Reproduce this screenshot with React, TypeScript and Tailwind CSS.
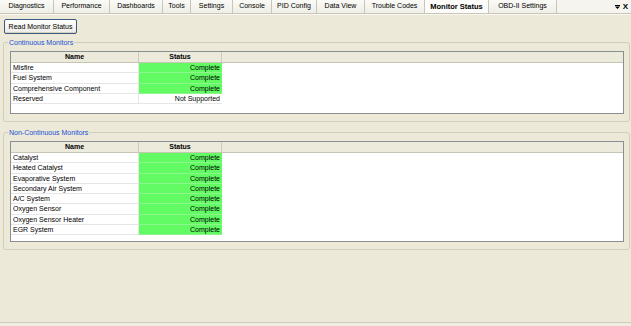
import React from "react";

const tabs: { label: string; w: number; active?: boolean }[] = [
  { label: "Diagnostics", w: 54 },
  { label: "Performance", w: 56 },
  { label: "Dashboards", w: 53 },
  { label: "Tools", w: 28 },
  { label: "Settings", w: 42 },
  { label: "Console", w: 39 },
  { label: "PID Config", w: 45 },
  { label: "Data View", w: 48 },
  { label: "Trouble Codes", w: 60 },
  { label: "Monitor Status", w: 64, active: true },
  { label: "OBD-II Settings", w: 68 },
];

type Row = { name: string; status: string };

const continuous: Row[] = [
  { name: "Misfire", status: "Complete" },
  { name: "Fuel System", status: "Complete" },
  { name: "Comprehensive Component", status: "Complete" },
  { name: "Reserved", status: "Not Supported" },
];

const nonContinuous: Row[] = [
  { name: "Catalyst", status: "Complete" },
  { name: "Heated Catalyst", status: "Complete" },
  { name: "Evaporative System", status: "Complete" },
  { name: "Secondary Air System", status: "Complete" },
  { name: "A/C System", status: "Complete" },
  { name: "Oxygen Sensor", status: "Complete" },
  { name: "Oxygen Sensor Heater", status: "Complete" },
  { name: "EGR System", status: "Complete" },
];

function Table({ rows, height }: { rows: Row[]; height: string }) {
  return (
    <div className={`${height} bg-white border border-[#8a8f96] flex flex-col overflow-hidden`}>
      <div className="flex h-[11px] shrink-0 bg-[#ebeadb] border-b border-[#c9c5b5] text-black font-bold leading-[10px]">
        <div className="w-[128px] text-center border-r border-[#cfcbbb]">Name</div>
        <div className="w-[83px] text-center border-r border-[#cfcbbb]">Status</div>
        <div className="flex-1" />
      </div>
      {rows.map((r) => {
        const ok = r.status === "Complete";
        return (
          <div key={r.name} className="flex h-[10.25px] shrink-0 leading-[9px]">
            <div className="w-[128px] pl-[2px] border-b border-r border-[#e6e6e6] whitespace-nowrap">
              {r.name}
            </div>
            <div
              className={`w-[83px] pr-[2px] text-right border-b whitespace-nowrap ${
                ok ? "bg-[#63fb63] border-[#8cf58c]" : "bg-white border-[#e6e6e6]"
              }`}
            >
              {r.status}
            </div>
          </div>
        );
      })}
    </div>
  );
}

function Group({
  title,
  rows,
  height,
  className,
}: {
  title: string;
  rows: Row[];
  height: string;
  className: string;
}) {
  return (
    <fieldset
      className={`border border-[#d0cdbc] rounded-[3px] ml-[3px] mr-[1px] pl-[6px] pr-[5px] pt-[4px] pb-[7px] ${className}`}
    >
      <legend className="ml-[-2px] px-[1px] text-[#1a4fd6] leading-[9px]">{title}</legend>
      <Table rows={rows} height={height} />
    </fieldset>
  );
}

export default function App() {
  return (
    <div
      className="w-[631px] h-[326px] bg-[#ece9d8] flex flex-col text-[7px] text-black overflow-hidden"
      style={{ fontFamily: '"Liberation Sans", Arial, sans-serif' }}
    >
      <div className="h-[14px] shrink-0 flex bg-[#f5f4ef] border-b border-[#c9c6b6]">
        {tabs.map((t) => (
          <div
            key={t.label}
            style={{ width: t.w }}
            className={`h-[13px] flex items-center justify-center border-r border-[#c8c6b8] whitespace-nowrap ${
              t.active ? "bg-[#fcfcfa] font-bold text-[7.5px]" : "bg-gradient-to-b from-[#fafaf7] to-[#efeee7]"
            }`}
          >
            {t.label}
          </div>
        ))}
        <div className="flex-1 flex items-center justify-end gap-[3px] pr-[3px]">
          <svg width="5" height="4" viewBox="0 0 5 4">
            <rect x="0" y="0" width="5" height="1" fill="#000" />
            <path d="M0 1.5 H5 L2.5 4 Z" fill="#000" />
          </svg>
          <span className="font-bold text-[8px] leading-[8px]">X</span>
        </div>
      </div>
      <div className="h-[1px] shrink-0 bg-[#f9f8f3]" />

      <div className="pl-[4px] pt-[4px] shrink-0">
        <button className="w-[73px] h-[15px] rounded-[2px] border border-[#3a5a80] bg-gradient-to-b from-[#ffffff] to-[#ecebe4] text-[7px] leading-[12px] text-black shadow-[inset_0_-1px_0_#d6d0c0]">
          Read Monitor Status
        </button>
      </div>

      <Group
        title="Continuous Monitors"
        rows={continuous}
        height="h-[63px]"
        className="mt-[4px]"
      />
      <Group
        title="Non-Continuous Monitors"
        rows={nonContinuous}
        height="h-[101px]"
        className="mt-[6px]"
      />

      <div className="flex-1" />
      <div className="h-[4px] shrink-0 border-t border-[#cfccbc] bg-[#efede2]" />
    </div>
  );
}
